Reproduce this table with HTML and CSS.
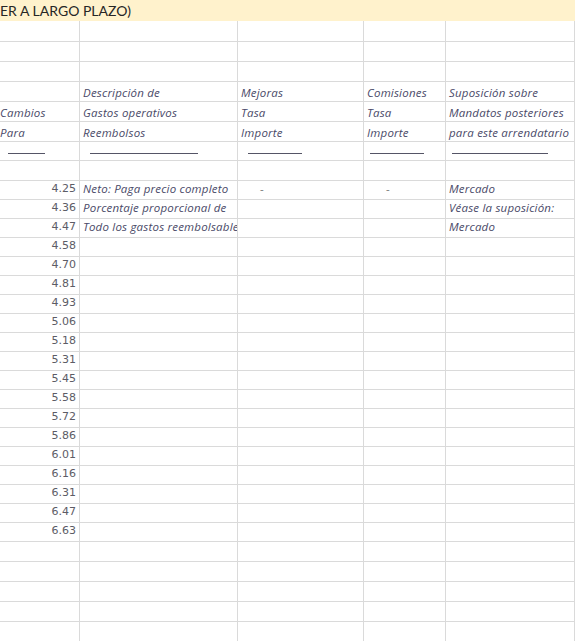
FILE: index.html
```html
<!DOCTYPE html>
<html lang="es">
<head>
<meta charset="utf-8">
<title>Hoja</title>
<link rel="stylesheet" href="styles.css">
</head>
<body>
<div class="sheet">
  <div class="title">ER A LARGO PLAZO)</div>
  <div class="r h21"><div></div><div></div><div></div><div></div><div></div></div>
  <div class="r"><div></div><div></div><div></div><div></div><div></div></div>
  <div class="r"><div></div><div></div><div></div><div></div><div></div></div>
  <div class="r lab"><div></div><div>Descripción de</div><div>Mejoras</div><div>Comisiones</div><div>Suposición sobre</div></div>
  <div class="r lab"><div class="a">Cambios</div><div>Gastos operativos</div><div>Tasa</div><div>Tasa</div><div>Mandatos posteriores</div></div>
  <div class="r lab"><div class="a">Para</div><div>Reembolsos</div><div>Importe</div><div>Importe</div><div>para este arrendatario</div></div>
  <div class="r h19 und"><div><span class="u ua"></span></div><div><span class="u ub"></span></div><div><span class="u uc"></span></div><div><span class="u ud"></span></div><div><span class="u ue"></span></div></div>
  <div class="r"><div></div><div></div><div></div><div></div><div></div></div>
  <div class="r h19 data"><div class="n">4.25</div><div class="t">Neto: Paga precio completo</div><div class="d dc">-</div><div class="d dd">-</div><div class="t">Mercado</div></div>
  <div class="r h19 data"><div class="n">4.36</div><div class="t">Porcentaje proporcional de</div><div></div><div></div><div class="t">Véase la suposición:</div></div>
  <div class="r h19 data"><div class="n">4.47</div><div class="t">Todo los gastos reembolsables</div><div></div><div></div><div class="t">Mercado</div></div>
  <div class="r h19 data"><div class="n">4.58</div><div></div><div></div><div></div><div></div></div>
  <div class="r h19 data"><div class="n">4.70</div><div></div><div></div><div></div><div></div></div>
  <div class="r h19 data"><div class="n">4.81</div><div></div><div></div><div></div><div></div></div>
  <div class="r h19 data"><div class="n">4.93</div><div></div><div></div><div></div><div></div></div>
  <div class="r h19 data"><div class="n">5.06</div><div></div><div></div><div></div><div></div></div>
  <div class="r h19 data"><div class="n">5.18</div><div></div><div></div><div></div><div></div></div>
  <div class="r h19 data"><div class="n">5.31</div><div></div><div></div><div></div><div></div></div>
  <div class="r h19 data"><div class="n">5.45</div><div></div><div></div><div></div><div></div></div>
  <div class="r h19 data"><div class="n">5.58</div><div></div><div></div><div></div><div></div></div>
  <div class="r h19 data"><div class="n">5.72</div><div></div><div></div><div></div><div></div></div>
  <div class="r h19 data"><div class="n">5.86</div><div></div><div></div><div></div><div></div></div>
  <div class="r h19 data"><div class="n">6.01</div><div></div><div></div><div></div><div></div></div>
  <div class="r h19 data"><div class="n">6.16</div><div></div><div></div><div></div><div></div></div>
  <div class="r h19 data"><div class="n">6.31</div><div></div><div></div><div></div><div></div></div>
  <div class="r h19 data"><div class="n">6.47</div><div></div><div></div><div></div><div></div></div>
  <div class="r h19 data"><div class="n">6.63</div><div></div><div></div><div></div><div></div></div>
  <div class="r"><div></div><div></div><div></div><div></div><div></div></div>
  <div class="r"><div></div><div></div><div></div><div></div><div></div></div>
  <div class="r"><div></div><div></div><div></div><div></div><div></div></div>
  <div class="r"><div></div><div></div><div></div><div></div><div></div></div>
  <div class="r"><div></div><div></div><div></div><div></div><div></div></div>
</div>
</body>
</html>
```
FILE: styles.css
```css
html, body {
  margin: 0;
  padding: 0;
  background: #ffffff;
}
.sheet {
  width: 575px;
  overflow: hidden;
}
.title {
  height: 21px;
  background: #fff2cc;
  font-family: Lato, "Liberation Sans", sans-serif;
  font-size: 14px;
  line-height: 21px;
  color: #262626;
  white-space: nowrap;
  padding-left: 0;
}
.r {
  display: grid;
  grid-template-columns: 80px 158px 126px 82px 129px;
  height: 20px;
}
.r.h21 { height: 21px; }
.r.h19 { height: 19px; }
.r > div {
  box-sizing: border-box;
  border-right: 1px solid #dadada;
  border-bottom: 1px solid #dadada;
  overflow: hidden;
  white-space: nowrap;
  display: flex;
  align-items: flex-end;
  padding: 0 2px 2px 3px;
  font-family: "Open Sans", "Noto Sans", sans-serif;
  font-style: italic;
  font-size: 11.5px;
  letter-spacing: 0.2px;
  line-height: 14px;
  color: #4a4a68;
}
.r.lab > div { padding-bottom: 1px; }
.r.data > div { padding-bottom: 3px; }
.r.lab > div.a { padding-left: 0; }
.r > div.n {
  justify-content: flex-end;
  padding-right: 3px;
  font-family: "DejaVu Sans", Verdana, sans-serif;
  font-style: normal;
  font-size: 11px;
  letter-spacing: 0;
  color: #5c5c66;
}
.r > div.d {
  font-style: normal;
  color: #777777;
}
.dc { padding-left: 22px !important; }
.dd { padding-left: 22px !important; }
.und > div { align-items: center; padding: 0; }
.u {
  display: block;
  height: 0;
  border-top: 1px solid #555566;
  margin-top: 5px;
}
.ua { width: 37px; margin-left: 8px; }
.ub { width: 108px; margin-left: 10px; }
.uc { width: 54px; margin-left: 10px; }
.ud { width: 54px; margin-left: 6px; }
.ue { width: 96px; margin-left: 6px; }
```
